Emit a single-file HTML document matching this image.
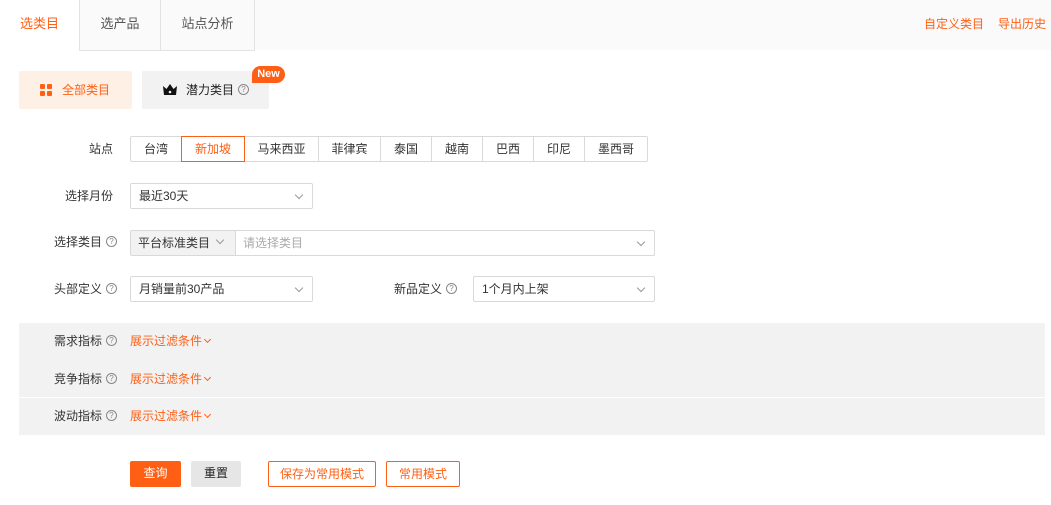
<!DOCTYPE html>
<html><head><meta charset="utf-8"><style>
*{box-sizing:border-box;margin:0;padding:0}
body{width:1051px;height:505px;background:#fff;font-family:"Liberation Sans","Noto Sans CJK SC",sans-serif;font-size:12px;color:#333;position:relative;overflow:hidden}
.a{position:absolute}
.or{color:#ff5f15}
.top{left:0;top:0;width:1051px;height:50px;background:#fafafa}
.tab{top:0;height:51px;border:1px solid #e3e3e3;border-top:none;background:#fafafa;font-size:13px;color:#555;text-align:center;line-height:48px}
.lbl{text-align:right;font-size:12px;color:#333}
.q{display:inline-block;width:11px;height:11px;border:1px solid #888;border-radius:50%;font-size:8px;line-height:9px;text-align:center;color:#888;vertical-align:middle;margin-left:4px;position:relative;top:-1px}
.sel{border:1px solid #d9d9d9;border-radius:2px;background:#fff;height:26px;line-height:24px;padding-left:8px}
.chev{position:absolute;right:10px;top:8px;width:6px;height:6px;border-right:1px solid #999;border-bottom:1px solid #999;transform:rotate(45deg)}
.seg{top:136px;height:26px;border:1px solid #d9d9d9;border-left:none;text-align:center;line-height:24px}
.btn{top:461px;height:26px;line-height:24px;text-align:center;border-radius:2px}
.frow{left:19px;width:1026px;background:#f2f2f2}
.fl{position:absolute;right:930px;width:100px;text-align:right}
.fv{position:absolute;left:111px;color:#ff5f15}
.sm{display:inline-block;width:5px;height:5px;border-right:1px solid #ff5f15;border-bottom:1px solid #ff5f15;transform:rotate(45deg);margin-left:3px;position:relative;top:-3px}
</style></head><body>
<div class="a top"></div>
<div class="a" style="left:0;top:0;width:79px;height:51px;background:#fff;"></div>
<div class="a or" style="left:0;top:0;width:79px;text-align:center;line-height:48px;font-size:13px">选类目</div>
<div class="a tab" style="left:79px;width:82px">选产品</div>
<div class="a tab" style="left:160px;width:95px;">站点分析</div>
<div class="a or" style="left:924px;top:15px">自定义类目</div>
<div class="a or" style="left:998px;top:15px">导出历史</div>

<div class="a" style="left:19px;top:71px;width:113px;height:38px;background:#fff0e6;border-radius:2px;line-height:38px" >
 <svg class="a" style="left:21px;top:13px" width="12" height="12"><rect x="0" y="0" width="5" height="5" rx="1" fill="#ff5f15"/><rect x="7" y="0" width="5" height="5" rx="1" fill="#ff5f15"/><rect x="0" y="7" width="5" height="5" rx="1" fill="#ff5f15"/><rect x="7" y="7" width="5" height="5" rx="1" fill="#ff5f15"/></svg>
 <span class="a or" style="left:43px;top:0">全部类目</span></div>
<div class="a" style="left:142px;top:71px;width:127px;height:38px;background:#f2f2f2;border-radius:2px;line-height:38px">
 <svg class="a" style="left:21px;top:13px" width="14" height="11"><path d="M0 2 L3.5 5 L7 0 L10.5 5 L14 2 L13 11 L1 11 Z" fill="#111"/><circle cx="7" cy="8" r="1.3" fill="#f2f2f2"/></svg>
 <span class="a" style="left:44px;top:0;color:#222">潜力类目<span class="q">?</span></span></div>
<div class="a" style="left:252px;top:66px;width:33px;height:17px;background:#ff5f15;border-radius:9px 9px 9px 0;color:#fff;font-weight:bold;font-size:11px;text-align:center;line-height:17px">New</div>

<div class="a lbl" style="left:40px;top:140px;width:73px">站点</div>
<div class="a seg" style="left:130px;width:52px;border-left:1px solid #d9d9d9;border-radius:2px 0 0 2px">台湾</div>
<div class="a seg or" style="left:181px;width:64px;border:1px solid #ff5f15">新加坡</div>
<div class="a seg" style="left:245px;width:74px">马来西亚</div>
<div class="a seg" style="left:319px;width:62px">菲律宾</div>
<div class="a seg" style="left:381px;width:51px">泰国</div>
<div class="a seg" style="left:432px;width:51px">越南</div>
<div class="a seg" style="left:483px;width:51px">巴西</div>
<div class="a seg" style="left:534px;width:51px">印尼</div>
<div class="a seg" style="left:585px;width:63px;border-radius:0 2px 2px 0">墨西哥</div>

<div class="a lbl" style="left:20px;top:187px;width:93px">选择月份</div>
<div class="a sel" style="left:130px;top:183px;width:183px">最近30天<i class="chev"></i></div>

<div class="a lbl" style="left:20px;top:233px;width:97px">选择类目<span class="q">?</span></div>
<div class="a sel" style="left:130px;top:230px;width:525px;color:#aaa;padding-left:112px">请选择类目<i class="chev"></i></div>
<div class="a" style="left:131px;top:231px;width:105px;height:24px;background:#f2f2f2;border-right:1px solid #d9d9d9;line-height:24px;padding-left:7px;color:#333">平台标准类目<i class="chev" style="right:12px;top:6px"></i></div>

<div class="a lbl" style="left:20px;top:280px;width:97px">头部定义<span class="q">?</span></div>
<div class="a sel" style="left:130px;top:276px;width:183px">月销量前30产品<i class="chev"></i></div>
<div class="a lbl" style="left:360px;top:280px;width:97px">新品定义<span class="q">?</span></div>
<div class="a sel" style="left:473px;top:276px;width:182px">1个月内上架<i class="chev"></i></div>

<div class="a frow" style="top:323px;height:74px"></div>
<div class="a frow" style="top:398px;height:37px"></div>
<div class="a" style="left:19px;top:332px;width:1026px;height:16px"><span class="fl" style="left:0;right:auto;width:98px">需求指标<span class="q">?</span></span><span class="fv">展示过滤条件<i class="sm"></i></span></div>
<div class="a" style="left:19px;top:370px;width:1026px;height:16px"><span class="fl" style="left:0;right:auto;width:98px">竞争指标<span class="q">?</span></span><span class="fv">展示过滤条件<i class="sm"></i></span></div>
<div class="a" style="left:19px;top:407px;width:1026px;height:16px"><span class="fl" style="left:0;right:auto;width:98px">波动指标<span class="q">?</span></span><span class="fv">展示过滤条件<i class="sm"></i></span></div>

<div class="a btn" style="left:130px;width:51px;background:#ff5f15;color:#fff">查询</div>
<div class="a btn" style="left:191px;width:50px;background:#e6e6e6;color:#222">重置</div>
<div class="a btn or" style="left:268px;width:108px;border:1px solid #ff5f15">保存为常用模式</div>
<div class="a btn or" style="left:386px;width:74px;border:1px solid #ff5f15">常用模式</div>
</body></html>
